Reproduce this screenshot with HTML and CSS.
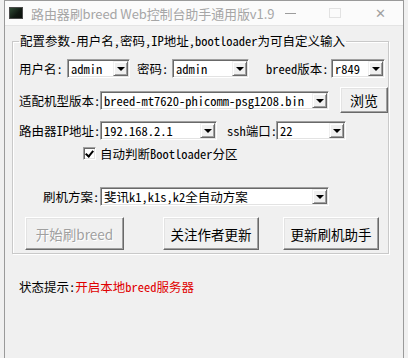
FILE: index.html
```html
<!DOCTYPE html>
<html lang="zh-CN">
<head>
<meta charset="UTF-8">
<meta name="viewport" content="width=device-width, initial-scale=1.0">
<title>路由器刷breed Web控制台助手通用版v1.9</title>
<link rel="stylesheet" href="styles.css">
</head>
<body>

<div class="window">
  <div class="titlebar">
    <span class="app-icon"></span>
    <span class="title">路由器刷breed Web控制台助手通用版v1.9</span>
    <span class="ctl ctl-min"></span>
    <span class="ctl ctl-max"></span>
    <span class="ctl ctl-close">✕</span>
  </div>

  <div class="client">
    <fieldset class="group">
      <legend>配置参数-用户名,密码,IP地址,bootloader为可自定义输入</legend>

      <div class="row row-user">
        <label class="lbl lbl-user">用户名:</label>
        <div class="combo combo-user"><span class="value">admin</span><span class="arrow"></span></div>
        <label class="lbl lbl-pass">密码:</label>
        <div class="combo combo-pass"><span class="value">admin</span><span class="arrow"></span></div>
        <label class="lbl lbl-ver">breed版本:</label>
        <div class="combo combo-ver"><span class="value">r849</span><span class="arrow"></span></div>
      </div>

      <div class="row row-model">
        <label class="lbl lbl-model">适配机型版本:</label>
        <div class="combo combo-wide"><span class="value">breed-mt7620-phicomm-psg1208.bin</span><span class="arrow"></span></div>
        <button class="btn btn-browse">浏览</button>
      </div>

      <div class="row row-ip">
        <label class="lbl lbl-model">路由器IP地址:</label>
        <div class="combo combo-ip"><span class="value">192.168.2.1</span><span class="arrow"></span></div>
        <label class="lbl lbl-ssh">ssh端口:</label>
        <div class="combo combo-ssh"><span class="value">22</span><span class="arrow"></span></div>
      </div>

      <div class="row row-check">
        <span class="checkbox"></span>
        <span class="check-label">自动判断Bootloader分区</span>
      </div>

      <div class="row row-plan">
        <label class="lbl lbl-plan">刷机方案:</label>
        <div class="combo combo-wide"><span class="value">斐讯k1,k1s,k2全自动方案</span><span class="arrow"></span></div>
      </div>

      <div class="row row-buttons">
        <button class="btn btn-big btn-start" disabled>开始刷breed</button>
        <button class="btn btn-big btn-follow">关注作者更新</button>
        <button class="btn btn-big btn-update">更新刷机助手</button>
      </div>
    </fieldset>

    <p class="status">状态提示:<span class="status-msg">开启本地breed服务器</span></p>
  </div>
</div>

</body>
</html>
```

FILE: styles.css
```css
body {
  margin: 0;
  background-color: #f0f0f0;
  font-family: "Noto Sans Mono CJK SC", "Noto Sans CJK SC", "Liberation Mono", monospace;
  font-size: 12.5px;
  color: #000;
}

.window {
  margin-left: 4px;
  width: 398px;
  height: 357px;
  border: 1px solid #9a9a9a;
  border-bottom: none;
  background-color: #f0f0f0;
}

/* title bar */
.titlebar {
  display: flex;
  align-items: center;
  height: 24px;
  background-color: #fbfbfb;
  border-bottom: 1px solid #e4e4e4;
  white-space: nowrap;
}

.app-icon {
  flex-shrink: 0;
  width: 12px;
  height: 10px;
  margin-left: 4px;
  background: linear-gradient(135deg, #2f4a34 0%, #101812 60%, #0b0f0b 100%);
  border: 1px solid #4a4a4a;
}

.title {
  flex-shrink: 0;
  width: 232px;
  margin-left: 8px;
  font-family: "Noto Sans CJK SC", "Liberation Sans", sans-serif;
  font-size: 13px;
  color: #a6a6a6;
  letter-spacing: -0.1px;
}

.ctl {
  display: block;
  flex-shrink: 0;
  color: #b0b0b0;
}

.ctl-min {
  width: 11px;
  height: 1px;
  margin-left: 22px;
  background-color: #9c9c9c;
}

.ctl-max {
  width: 12px;
  height: 10px;
  margin-left: 33px;
  border: 1px solid #e2e2e2;
  box-sizing: border-box;
}

.ctl-close {
  margin-left: 34px;
  font-family: "DejaVu Sans", sans-serif;
  font-size: 13px;
  color: #a0a0a0;
}

/* client area */
.client {
  padding: 8px 0 0 7px;
}

.group {
  width: 369px;
  height: 218px;
  margin: 0;
  padding: 0 0 0 6px;
  border: 1px solid #c9c9c9;
  box-shadow: inset 1px 1px 0 #fff, 1px 1px 0 #fff;
  box-sizing: content-box;
}

.group legend {
  padding: 0 1px;
  margin-left: 0;
  line-height: 14px;
}

.row {
  display: flex;
  align-items: center;
  white-space: nowrap;
}

.row-user { margin-top: 10px; height: 20px; }
.row-model { margin-top: 9px; height: 26px; }
.row-ip { margin-top: 8px; height: 19px; }
.row-check { margin-top: 6px; height: 14px; }
.row-plan { margin-top: 26px; height: 20px; }
.row-buttons { margin-top: 11px; height: 33px; }

.lbl {
  flex-shrink: 0;
}

.lbl-user { width: 48px; }
.lbl-pass { width: 35px; margin-left: 7px; }
.lbl-ver { width: 65px; margin-left: 17px; }
.lbl-model { width: 81px; }
.lbl-ssh { width: 49px; margin-left: 10px; }
.lbl-plan { width: 57px; margin-left: 24px; }

/* combo boxes */
.combo {
  display: flex;
  align-items: center;
  flex-shrink: 0;
  height: 19px;
  box-sizing: border-box;
  background-color: #fff;
  border-top: 1px solid #a0a0a0;
  border-left: 1px solid #a0a0a0;
  border-right: 1px solid #fff;
  border-bottom: 1px solid #fff;
  box-shadow: inset 1px 1px 0 #696969, inset -1px -1px 0 #e3e3e3;
  padding: 1px;
}

.combo .value {
  flex: 1;
  padding-left: 2px;
  line-height: 15px;
}

.combo .arrow {
  position: relative;
  flex-shrink: 0;
  align-self: stretch;
  width: 15px;
  background-color: #f0f0f0;
  border-top: 1px solid #f0f0f0;
  border-left: 1px solid #f0f0f0;
  border-right: 1px solid #696969;
  border-bottom: 1px solid #696969;
  box-shadow: inset 1px 1px 0 #fff, inset -1px -1px 0 #a0a0a0;
  box-sizing: border-box;
}

.combo .arrow::after {
  content: "";
  position: absolute;
  left: 3px;
  top: 5px;
  border-left: 4px solid transparent;
  border-right: 4px solid transparent;
  border-top: 4px solid #000;
}

.combo-user { width: 63px; }
.combo-pass { width: 77px; }
.combo-ver { width: 54px; }
.combo-wide { width: 229px; }
.combo-ip { width: 117px; }
.combo-ssh { width: 70px; }

/* buttons */
.btn {
  flex-shrink: 0;
  font-family: inherit;
  font-size: 13px;
  color: #000;
  background-color: #f0f0f0;
  border-top: 1px solid #fff;
  border-left: 1px solid #fff;
  border-right: 1px solid #696969;
  border-bottom: 1px solid #696969;
  box-shadow: inset -1px -1px 0 #a0a0a0, inset 1px 1px 0 #e3e3e3;
  padding: 0;
  box-sizing: border-box;
}

.btn-browse {
  width: 48px;
  height: 26px;
  margin-left: 11px;
  font-family: "Noto Sans CJK SC", sans-serif;
  font-size: 14px;
}

.btn-big {
  height: 33px;
  font-family: "Noto Sans CJK SC", sans-serif;
  font-size: 13.5px;
}

.btn-start {
  width: 99px;
  margin-left: 6px;
  color: #a0a0a0;
  text-shadow: 1px 1px 0 #fff;
}

.btn-follow {
  width: 96px;
  margin-left: 39px;
}

.btn-update {
  width: 96px;
  margin-left: 24px;
}

/* checkbox */
.checkbox {
  position: relative;
  flex-shrink: 0;
  width: 13px;
  height: 13px;
  margin-left: 64px;
  box-sizing: border-box;
  background-color: #fff;
  border-top: 1px solid #a0a0a0;
  border-left: 1px solid #a0a0a0;
  border-right: 1px solid #fff;
  border-bottom: 1px solid #fff;
  box-shadow: inset 1px 1px 0 #696969, inset -1px -1px 0 #e3e3e3;
}

.checkbox::after {
  content: "";
  position: absolute;
  left: 3px;
  top: 1px;
  width: 3px;
  height: 6px;
  border-right: 2px solid #000;
  border-bottom: 2px solid #000;
  transform: rotate(40deg);
}

.check-label {
  margin-left: 4px;
}

/* status */
.status {
  margin: 26px 0 0 7px;
  line-height: 14px;
}

.status-msg {
  color: #e00000;
}
```
